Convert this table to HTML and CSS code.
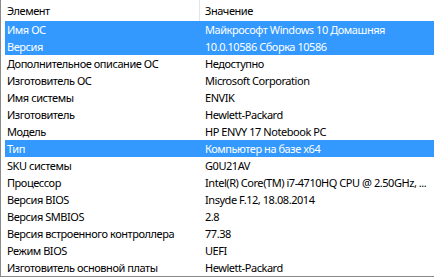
FILE: index.html
```html
<!DOCTYPE html>
<html>
<head>
<meta charset="utf-8">
<link rel="stylesheet" href="styles.css">
</head>
<body>
<div class="frame">
  <div class="head">
    <div class="hc first">Элемент</div>
    <div class="hc">Значение</div>
  </div>
  <div class="rows">
    <div class="row sel"><div class="c1">Имя ОС</div><div class="c2">Майкрософт Windows 10 Домашняя</div></div>
    <div class="row sel"><div class="c1">Версия</div><div class="c2">10.0.10586 Сборка 10586</div></div>
    <div class="row"><div class="c1">Дополнительное описание ОС</div><div class="c2">Недоступно</div></div>
    <div class="row"><div class="c1">Изготовитель ОС</div><div class="c2">Microsoft Corporation</div></div>
    <div class="row"><div class="c1">Имя системы</div><div class="c2">ENVIK</div></div>
    <div class="row"><div class="c1">Изготовитель</div><div class="c2">Hewlett-Packard</div></div>
    <div class="row"><div class="c1">Модель</div><div class="c2">HP ENVY 17 Notebook PC</div></div>
    <div class="row sel"><div class="c1">Тип</div><div class="c2">Компьютер на базе x64</div></div>
    <div class="row"><div class="c1">SKU системы</div><div class="c2">G0U21AV</div></div>
    <div class="row"><div class="c1">Процессор</div><div class="c2">Intel(R) Core(TM) i7-4710HQ CPU @ 2.50GHz, ...</div></div>
    <div class="row"><div class="c1">Версия BIOS</div><div class="c2">Insyde F.12, 18.08.2014</div></div>
    <div class="row"><div class="c1">Версия SMBIOS</div><div class="c2">2.8</div></div>
    <div class="row"><div class="c1">Версия встроенного контроллера</div><div class="c2">77.38</div></div>
    <div class="row"><div class="c1">Режим BIOS</div><div class="c2">UEFI</div></div>
    <div class="row"><div class="c1">Изготовитель основной платы</div><div class="c2">Hewlett-Packard</div></div>
  </div>
</div>
</body>
</html>
```
FILE: styles.css
```css
html, body {
  margin: 0;
  padding: 0;
  background: #ffffff;
}
body {
  font-family: "Noto Sans", "Open Sans", sans-serif;
  font-size: 11px;
  letter-spacing: -0.45px;
  color: #000000;
  width: 434px;
  height: 279px;
  overflow: hidden;
}
.frame {
  box-sizing: border-box;
  width: 434px;
  height: 277px;
  border-left: 1px solid #8a8a8a;
  border-bottom: 1px solid #8a8a8a;
  padding-left: 4px;
}
.head {
  display: flex;
  height: 21px;
}
.hc {
  box-sizing: border-box;
  padding-left: 2px;
  padding-top: 3px;
  line-height: 15px;
  white-space: nowrap;
}
.hc.first {
  width: 195px;
  border-right: 1px solid #e5e5e5;
}
.hc + .hc {
  padding-left: 5px;
}
.rows {
  display: flex;
  flex-direction: column;
}
.row {
  display: flex;
  height: 17px;
  line-height: 17px;
  white-space: nowrap;
}
.c1 {
  width: 195px;
  box-sizing: border-box;
  padding-left: 2px;
}
.c2 {
  flex: 1;
  padding-left: 5px;
  overflow: hidden;
}
.row.sel {
  background: #3399ff;
  color: #ffffff;
}
```
